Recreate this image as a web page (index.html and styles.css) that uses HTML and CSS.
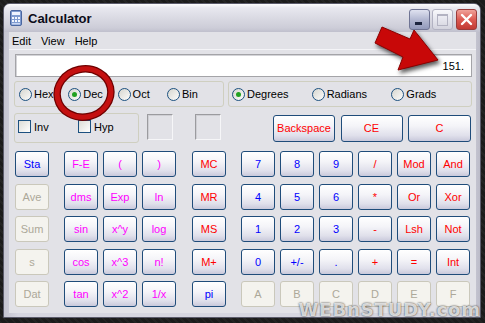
FILE: index.html
```html
<!DOCTYPE html>
<html lang="en">

<head>
    <meta charset="UTF-8">
    <meta name="viewport" content="width=device-width, initial-scale=1.0">
    <title>Calculator</title>
    <link rel="stylesheet" href="styles.css">
</head>

<body>

    <div class="window">
        <div class="titlebar">
            <svg class="app-icon" width="12" height="16" viewBox="0 0 12 16">
                <rect x="0.5" y="0.5" width="11" height="15" rx="1.5" fill="#7f9bd0" stroke="#4a66a0" />
                <rect x="2" y="2" width="8" height="3" fill="#eef3ff" />
                <rect x="2" y="7" width="2" height="2" fill="#f4f7ff" />
                <rect x="5" y="7" width="2" height="2" fill="#f4f7ff" />
                <rect x="8" y="7" width="2" height="2" fill="#f4f7ff" />
                <rect x="2" y="10" width="2" height="2" fill="#f4f7ff" />
                <rect x="5" y="10" width="2" height="2" fill="#f4f7ff" />
                <rect x="8" y="10" width="2" height="2" fill="#f4f7ff" />
                <rect x="2" y="13" width="8" height="1.5" fill="#c9d6f2" />
            </svg>
            <span class="title">Calculator</span>
            <div class="caption">
                <div class="cap-btn min"></div>
                <div class="cap-btn max"></div>
                <div class="cap-btn close">
                    <svg width="21" height="21" viewBox="0 0 21 21">
                        <path d="M6 6 L15 15 M15 6 L6 15" stroke="#fff" stroke-width="2.4" stroke-linecap="round" />
                    </svg>
                </div>
            </div>
        </div>

        <div class="client">
            <div class="menubar"><span>Edit</span><span>View</span><span>Help</span></div>

            <div class="display">151.</div>

            <div class="modes">
                <div class="group base">
                    <div class="opt"><span class="radio"></span>Hex</div>
                    <div class="opt"><span class="radio on"></span>Dec</div>
                    <div class="opt"><span class="radio"></span>Oct</div>
                    <div class="opt"><span class="radio"></span>Bin</div>
                </div>
                <div class="group angle">
                    <div class="opt"><span class="radio on"></span>Degrees</div>
                    <div class="opt"><span class="radio"></span>Radians</div>
                    <div class="opt"><span class="radio"></span>Grads</div>
                </div>
            </div>

            <div class="controls">
                <div class="group invhyp">
                    <div class="opt"><span class="check"></span>Inv</div>
                    <div class="opt"><span class="check"></span>Hyp</div>
                </div>
                <div class="sunken first"></div>
                <div class="sunken second"></div>
                <div class="clears">
                    <div class="key r wide">Backspace</div>
                    <div class="key r wide">CE</div>
                    <div class="key r wide last">C</div>
                </div>
            </div>

            <div class="keys">
                <div class="kgroup one">
                    <div class="key b">Sta</div>
                    <div class="key off">Ave</div>
                    <div class="key off">Sum</div>
                    <div class="key off">s</div>
                    <div class="key off">Dat</div>
                </div>
                <div class="kgroup three">
                    <div class="key m">F-E</div>
                    <div class="key m">(</div>
                    <div class="key m">)</div>
                    <div class="key m">dms</div>
                    <div class="key m">Exp</div>
                    <div class="key m">ln</div>
                    <div class="key m">sin</div>
                    <div class="key m">x^y</div>
                    <div class="key m">log</div>
                    <div class="key m">cos</div>
                    <div class="key m">x^3</div>
                    <div class="key m">n!</div>
                    <div class="key m">tan</div>
                    <div class="key m">x^2</div>
                    <div class="key m">1/x</div>
                </div>
                <div class="kgroup one mem">
                    <div class="key r">MC</div>
                    <div class="key r">MR</div>
                    <div class="key r">MS</div>
                    <div class="key r">M+</div>
                    <div class="key b">pi</div>
                </div>
                <div class="kgroup six">
                    <div class="key b">7</div>
                    <div class="key b">8</div>
                    <div class="key b">9</div>
                    <div class="key r">/</div>
                    <div class="key r">Mod</div>
                    <div class="key r">And</div>
                    <div class="key b">4</div>
                    <div class="key b">5</div>
                    <div class="key b">6</div>
                    <div class="key r">*</div>
                    <div class="key r">Or</div>
                    <div class="key r">Xor</div>
                    <div class="key b">1</div>
                    <div class="key b">2</div>
                    <div class="key b">3</div>
                    <div class="key r">-</div>
                    <div class="key r">Lsh</div>
                    <div class="key r">Not</div>
                    <div class="key b">0</div>
                    <div class="key b">+/-</div>
                    <div class="key b">.</div>
                    <div class="key r">+</div>
                    <div class="key r">=</div>
                    <div class="key r">Int</div>
                    <div class="key off">A</div>
                    <div class="key off">B</div>
                    <div class="key off">C</div>
                    <div class="key off">D</div>
                    <div class="key off">E</div>
                    <div class="key off">F</div>
                </div>
            </div>
        </div>
    </div>

    <!-- annotations drawn over the screenshot -->
    <svg class="marks" width="485" height="323" viewBox="0 0 485 323">
        <g transform="rotate(-12 84 93)">
            <ellipse cx="84" cy="93" rx="27" ry="24" fill="none" stroke="#6e0000" stroke-width="7.5" />
            <ellipse cx="84" cy="93" rx="27" ry="24" fill="none" stroke="#c41010" stroke-width="5" />
        </g>
        <polygon class="arrow" points="382,27 410,39 414,30 438,60 398,70 403,57 375,43" />
    </svg>

    <div class="watermark">WEBnSTUDY.com</div>

</body>

</html>
```

FILE: styles.css
```css
body {
    margin: 0;
    width: 485px;
    height: 323px;
    overflow: hidden;
    position: relative;
    font-family: 'Liberation Sans', Arial, sans-serif;
    font-size: 11px;
    color: #000;
    background-color: #1b1b1b;
    background-image: repeating-linear-gradient(45deg, rgba(255, 255, 255, 0.035) 0 2px, transparent 2px 5px);
}

.window {
    margin: 3px 0 0 3px;
    width: 478px;
    height: 315px;
    box-sizing: border-box;
    border: 1px solid #5c5c6c;
    border-radius: 7px 7px 0 0;
    background: linear-gradient(90deg, #c4c4d0, #d6d6e0 3%, #d6d6e0 97%, #bcbcc8);
    display: flex;
    flex-direction: column;
}

.titlebar {
    height: 28px;
    flex-shrink: 0;
    display: flex;
    align-items: center;
    padding-left: 6px;
    border-radius: 6px 6px 0 0;
    background: linear-gradient(#fdfdfd 0%, #e8e8ef 14%, #dadae3 50%, #cdcdd8 85%, #c0c0cd 100%);
}

.app-icon {
    display: block;
}

.title {
    margin-left: 6px;
    font-size: 13px;
    font-weight: bold;
    color: #0c0c18;
}

.caption {
    margin-left: auto;
    margin-right: 3px;
    align-self: flex-start;
    margin-top: 5px;
    display: flex;
}

.cap-btn {
    width: 21px;
    height: 21px;
    box-sizing: border-box;
    border-radius: 3px;
    position: relative;
}

.cap-btn.min {
    border: 1px solid #6f7494;
    background: linear-gradient(#dfe2f0, #b3b8d2 50%, #9299bb);
}

.cap-btn.min::after {
    content: "";
    position: absolute;
    left: 5px;
    top: 12px;
    width: 7px;
    height: 3px;
    background: #1d2540;
}

.cap-btn.max {
    margin-left: 2px;
    border: 1px solid #b2b2c2;
    background: linear-gradient(#f8f8fb, #e6e6ee 50%, #d4d4de);
}

.cap-btn.max::after {
    content: "";
    position: absolute;
    left: 4px;
    top: 4px;
    width: 9px;
    height: 9px;
    border: 1px solid #b3b3c2;
    border-top-width: 2px;
}

.cap-btn.close {
    margin-left: 3px;
    border: 1px solid #9a3b3b;
    background: linear-gradient(#f0a29a, #dc5a52 50%, #c23a34);
}

.cap-btn.close svg {
    position: absolute;
    left: -1px;
    top: -1px;
}

.client {
    flex: 1;
    margin: 0 4px 4px 5px;
    background-color: #e2e2e7;
    display: flex;
    flex-direction: column;
}

.menubar {
    height: 18px;
    line-height: 18px;
    padding-left: 3px;
    display: flex;
    border-bottom: 1px solid #f4f4f7;
    box-sizing: border-box;
}

.menubar span {
    margin-right: 10px;
}

.display {
    margin: 4px 4px 0 6px;
    height: 23px;
    box-sizing: border-box;
    border: 1px solid #a4a4a8;
    box-shadow: inset 1px 1px 0 #d4d4d8;
    background-color: #fff;
    text-align: right;
    padding-right: 7px;
    line-height: 22px;
}

.modes {
    display: flex;
    margin-top: 4px;
    height: 26px;
    padding-left: 5px;
}

.group {
    border: 1px solid #cfcfc0;
    border-radius: 3px;
    box-sizing: border-box;
    display: flex;
    align-items: center;
}

.group.base {
    width: 210px;
    padding-left: 4px;
}

.group.angle {
    width: 244px;
    margin-left: 4px;
    padding-left: 3px;
}

.opt {
    display: flex;
    align-items: center;
}

.base .opt {
    width: 49.3px;
}

.angle .opt {
    width: 80.5px;
}

.radio {
    width: 13px;
    height: 13px;
    box-sizing: border-box;
    border-radius: 50%;
    border: 1px solid #1c5180;
    background: linear-gradient(135deg, #d6d6cf, #fcfcfb);
    margin-right: 2px;
    position: relative;
}

.radio.on::after {
    content: "";
    position: absolute;
    left: 3px;
    top: 3px;
    width: 5px;
    height: 5px;
    border-radius: 50%;
    background-color: #21a121;
}

.controls {
    display: flex;
    margin-top: 6px;
    height: 30px;
    padding-left: 5px;
}

.group.invhyp {
    width: 125px;
    padding-left: 3px;
    padding-bottom: 3px;
}

.invhyp .opt {
    width: 62px;
}

.check {
    width: 13px;
    height: 13px;
    box-sizing: border-box;
    border: 1px solid #1c5180;
    background: linear-gradient(135deg, #dcdcd6, #fff);
    margin-right: 3px;
}

.sunken {
    margin-top: 1px;
    width: 26px;
    height: 26px;
    box-sizing: border-box;
    border: 1px solid;
    border-color: #9b9b9f #f6f6f8 #f6f6f8 #9b9b9f;
    box-shadow: inset 1px 1px 0 #cfcfd4;
}

.sunken.first {
    margin-left: 8px;
}

.sunken.second {
    margin-left: 22px;
}

.clears {
    margin-left: auto;
    margin-right: 5px;
    margin-top: 2px;
    display: flex;
    gap: 5.5px;
    height: 27px;
}

.key {
    box-sizing: border-box;
    border: 1px solid #1f4c7a;
    border-radius: 3px;
    background: linear-gradient(#ffffff, #f4f4f8 40%, #e0e0eb 78%, #c9c9db);
    text-align: center;
    line-height: 24px;
}

.clears .key {
    line-height: 25px;
}

.key.wide {
    width: 62px;
}

.key.wide.last {
    width: 63px;
}

.key.b {
    color: #0000ff;
}

.key.m {
    color: #ff00ff;
}

.key.r {
    color: #ff0000;
}

.key.off {
    border-color: #cac8bb;
    background: #f4f3ee;
    color: #aca899;
}

.keys {
    display: flex;
    margin-top: 8px;
    padding-left: 6px;
}

.kgroup {
    display: grid;
    grid-auto-rows: 26px;
    column-gap: 5px;
    row-gap: 6.5px;
}

.kgroup.one {
    grid-template-columns: 34px;
}

.kgroup.three {
    grid-template-columns: repeat(3, 34px);
    margin-left: 15px;
}

.kgroup.mem {
    margin-left: 16px;
}

.kgroup.six {
    grid-template-columns: repeat(6, 34px);
    margin-left: 15px;
}

.marks {
    position: absolute;
    left: 0;
    top: 0;
    pointer-events: none;
}

.arrow {
    fill: #c80808;
    stroke: #8a0000;
    stroke-width: 1;
    filter: drop-shadow(2px 3px 2px rgba(0, 0, 0, 0.65));
}

.watermark {
    position: absolute;
    right: 4px;
    top: 301px;
    font-family: 'DejaVu Sans', Verdana, sans-serif;
    font-weight: bold;
    font-size: 18px;
    letter-spacing: 0.9px;
    line-height: 1;
    white-space: nowrap;
    color: rgba(255, 255, 255, 0.78);
    text-shadow: 0 0 2px rgba(0, 0, 0, 0.85);
}
```
